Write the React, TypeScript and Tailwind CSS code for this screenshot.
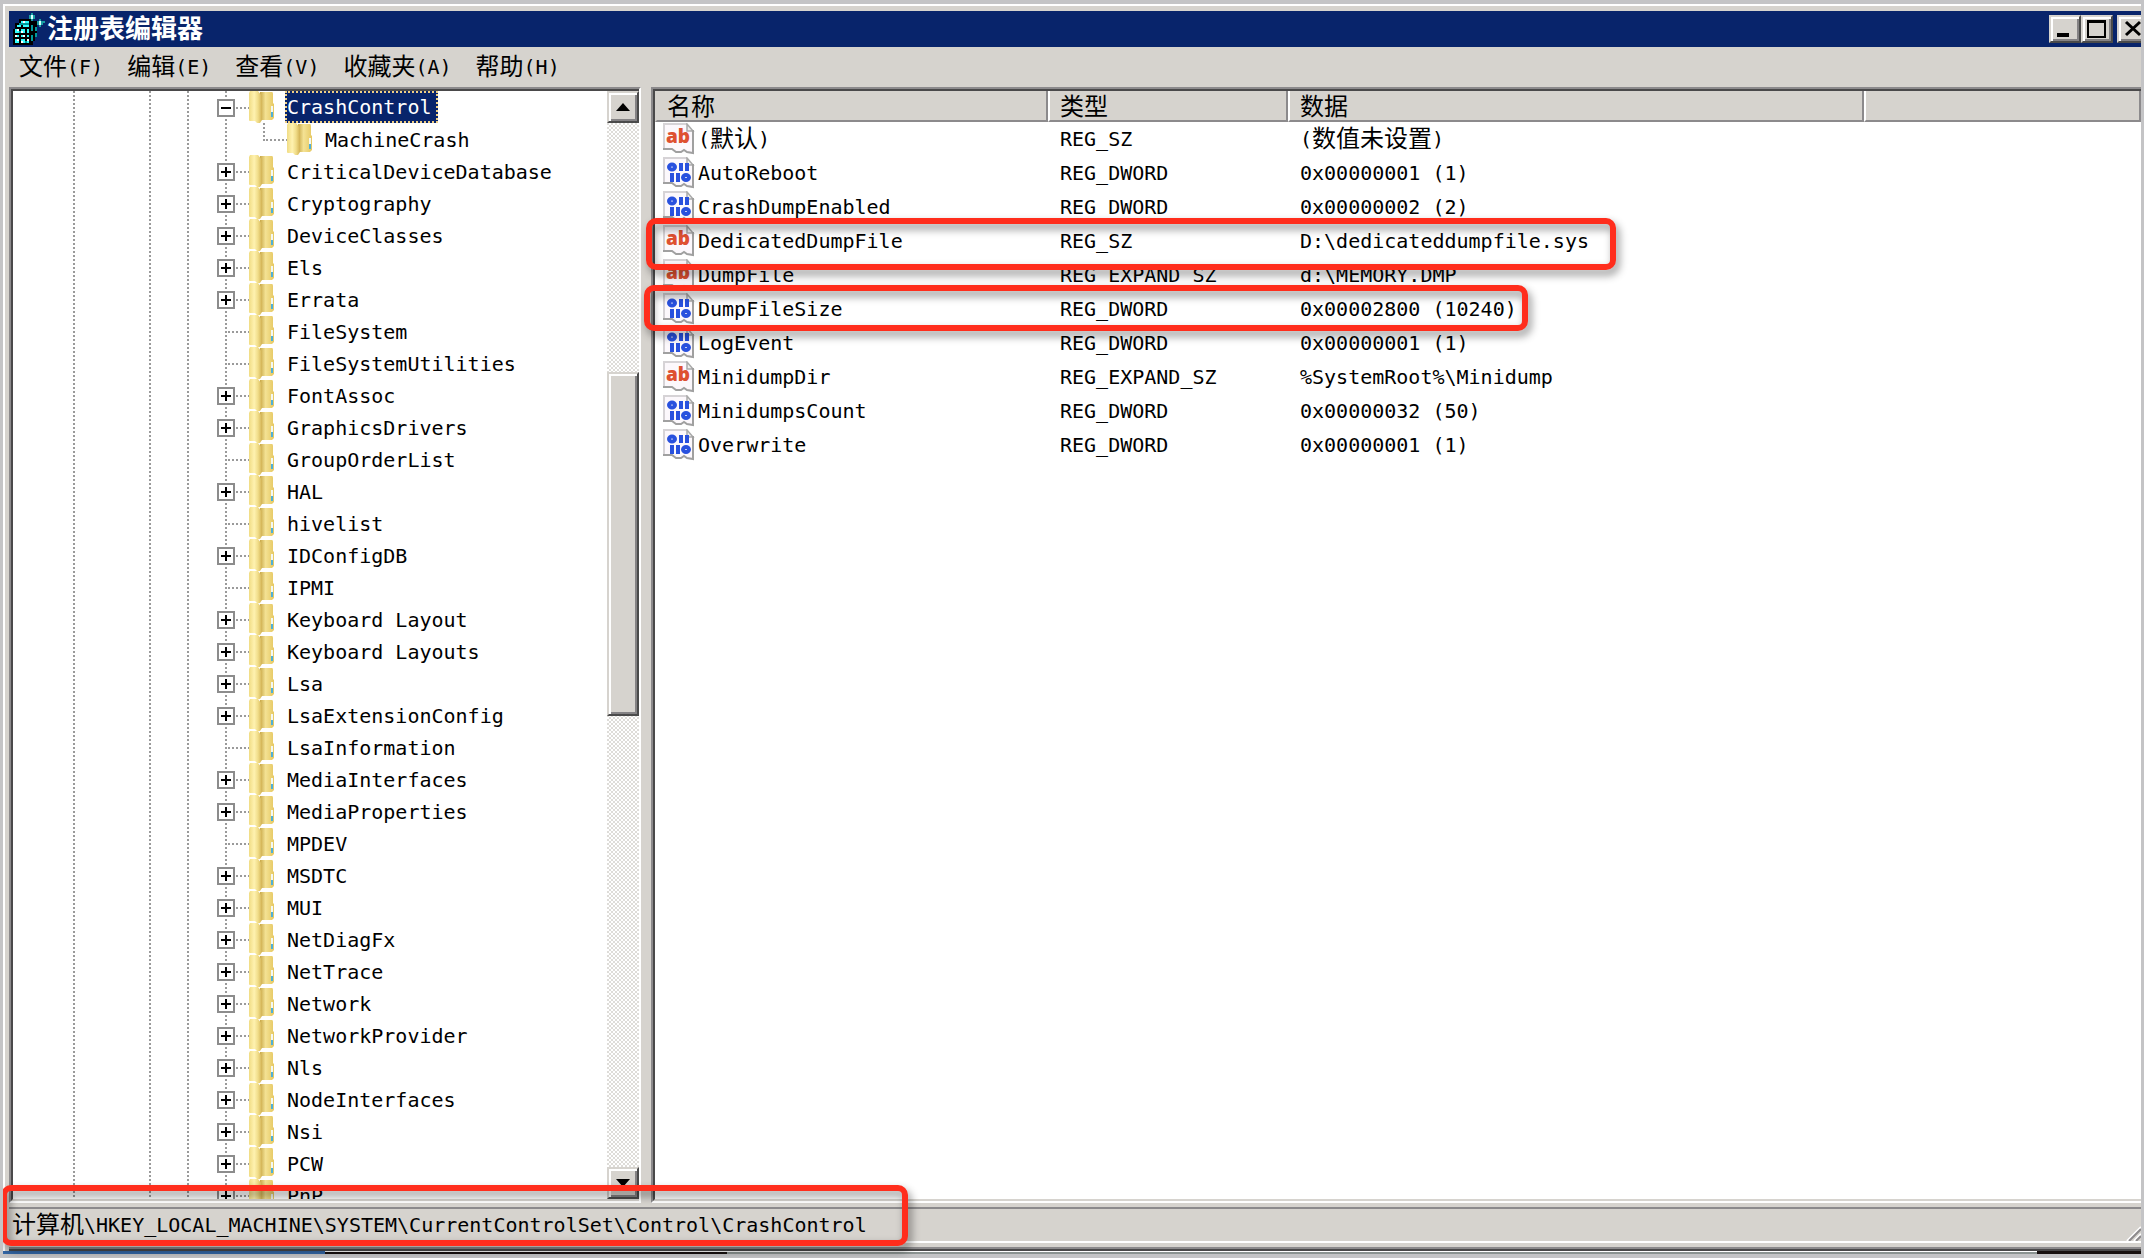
import type { ReactNode } from 'react';

type NodeState = 'open' | 'closed' | 'leaf';

interface TreeNode {
  name: string;
  state: NodeState;
  depth?: number;
}

interface RegistryValue {
  id: string;
  label?: ReactNode;
  kind: 'text' | 'binary';
  type: string;
  data: ReactNode;
}

const MENUS = [
  { label: '文件', key: 'F' },
  { label: '编辑', key: 'E' },
  { label: '查看', key: 'V' },
  { label: '收藏夹', key: 'A' },
  { label: '帮助', key: 'H' },
];

const TREE: TreeNode[] = [
  { name: 'CrashControl', state: 'open' },
  { name: 'MachineCrash', state: 'leaf', depth: 1 },
  { name: 'CriticalDeviceDatabase', state: 'closed' },
  { name: 'Cryptography', state: 'closed' },
  { name: 'DeviceClasses', state: 'closed' },
  { name: 'Els', state: 'closed' },
  { name: 'Errata', state: 'closed' },
  { name: 'FileSystem', state: 'leaf' },
  { name: 'FileSystemUtilities', state: 'leaf' },
  { name: 'FontAssoc', state: 'closed' },
  { name: 'GraphicsDrivers', state: 'closed' },
  { name: 'GroupOrderList', state: 'leaf' },
  { name: 'HAL', state: 'closed' },
  { name: 'hivelist', state: 'leaf' },
  { name: 'IDConfigDB', state: 'closed' },
  { name: 'IPMI', state: 'leaf' },
  { name: 'Keyboard Layout', state: 'closed' },
  { name: 'Keyboard Layouts', state: 'closed' },
  { name: 'Lsa', state: 'closed' },
  { name: 'LsaExtensionConfig', state: 'closed' },
  { name: 'LsaInformation', state: 'leaf' },
  { name: 'MediaInterfaces', state: 'closed' },
  { name: 'MediaProperties', state: 'closed' },
  { name: 'MPDEV', state: 'leaf' },
  { name: 'MSDTC', state: 'closed' },
  { name: 'MUI', state: 'closed' },
  { name: 'NetDiagFx', state: 'closed' },
  { name: 'NetTrace', state: 'closed' },
  { name: 'Network', state: 'closed' },
  { name: 'NetworkProvider', state: 'closed' },
  { name: 'Nls', state: 'closed' },
  { name: 'NodeInterfaces', state: 'closed' },
  { name: 'Nsi', state: 'closed' },
  { name: 'PCW', state: 'closed' },
  { name: 'PnP', state: 'closed' },
];

const VALUES: RegistryValue[] = [
  { id: 'default', label: <Parens>默认</Parens>, kind: 'text', type: 'REG_SZ', data: <Parens>数值未设置</Parens> },
  { id: 'AutoReboot', kind: 'binary', type: 'REG_DWORD', data: '0x00000001 (1)' },
  { id: 'CrashDumpEnabled', kind: 'binary', type: 'REG_DWORD', data: '0x00000002 (2)' },
  { id: 'DedicatedDumpFile', kind: 'text', type: 'REG_SZ', data: 'D:\\dedicateddumpfile.sys' },
  { id: 'DumpFile', kind: 'text', type: 'REG_EXPAND_SZ', data: 'd:\\MEMORY.DMP' },
  { id: 'DumpFileSize', kind: 'binary', type: 'REG_DWORD', data: '0x00002800 (10240)' },
  { id: 'LogEvent', kind: 'binary', type: 'REG_DWORD', data: '0x00000001 (1)' },
  { id: 'MinidumpDir', kind: 'text', type: 'REG_EXPAND_SZ', data: '%SystemRoot%\\Minidump' },
  { id: 'MinidumpsCount', kind: 'binary', type: 'REG_DWORD', data: '0x00000032 (50)' },
  { id: 'Overwrite', kind: 'binary', type: 'REG_DWORD', data: '0x00000001 (1)' },
];

const BEVEL =
  'border-2 border-t-[#d6d3ce] border-l-[#d6d3ce] border-r-[#4a4a4a] border-b-[#4a4a4a] bg-[#d6d3ce] shadow-[inset_2px_2px_#fff,inset_-2px_-2px_#848284]';

function Hans({ children }: { children: ReactNode }) {
  return <span className="text-[24px] leading-none">{children}</span>;
}

function Parens({ children }: { children: ReactNode }) {
  return (
    <span className="flex items-center">
      (<Hans>{children}</Hans>)
    </span>
  );
}

function RegeditIcon() {
  return (
    <svg className="size-8 shrink-0" viewBox="0 0 16 16" shapeRendering="crispEdges" aria-hidden="true">
      <path d="M3 3h6v1h3v7h-1v3h-1v2H0V8h1V5h2z" fill="#000" />
      <path d="M4 4h4v1H4zM2 6h2v1H2zM5 6h3v1H5zM1 8h2v2H1zM4 8h2v2H4zM7 8h1v2H7zM1 11h2v1H1zM4 11h2v1H4zM7 11h1v1H7zM1 13h2v2H1zM4 13h2v2H4zM7 13h1v2H7z" fill="#3ff" />
      <path d="M3 5h5v1H3zM9 6h1v3H9zM11 7h1v2h-1zM9 11h1v3H9zM11 10h1v2h-1zM3 9h1v1H3zM6 14h1v1H6z" fill="#009a9c" />
      <path d="M5 4h1v1H5zM2 8h1v1H2zM4 9h1v1H4zM1 11h1v1H1zM5 11h1v1H5zM2 13h1v1H2zM4 14h1v1H4zM7 13h1v1H7z" fill="#fff" />
      <path d="M9 0h1v1h1v2h-1v1H9V3H8V1h1zM13 3h1v1h2v1h-1v1h-1v1h-1V6h-1V4h1z" fill="#19a0a4" />
      <path d="M9 1h1v2H9zM13 4h1v2h-1z" fill="#dff" />
    </svg>
  );
}

function FolderIcon() {
  return (
    <svg className="h-8 w-[26px] shrink-0" viewBox="0 0 26 32" aria-hidden="true">
      <defs>
        <linearGradient id="cover" x1="0" x2="1">
          <stop offset="0" stopColor="#f0dc84" />
          <stop offset="0.4" stopColor="#fff2b0" />
          <stop offset="0.7" stopColor="#f0dc88" />
          <stop offset="1" stopColor="#d2b254" />
        </linearGradient>
        <linearGradient id="back" x1="0" x2="1">
          <stop offset="0" stopColor="#c8a848" />
          <stop offset="0.4" stopColor="#f4e294" />
          <stop offset="1" stopColor="#e6c862" />
        </linearGradient>
      </defs>
      <path d="M11 1h12q1 0 1 2v9l1 1v14l-2 2H11z" fill="url(#back)" />
      <path d="M1 0h8l4 5v24l-2 3H8l-2-2H1q-1 0-1-1V2z" fill="url(#cover)" />
      <rect x="22" y="15" width="2" height="6" fill="#f3f8f4" />
      <rect x="22" y="21" width="2" height="5" fill="#4fb0d8" />
    </svg>
  );
}

function ValueIcon({ kind }: { kind: RegistryValue['kind'] }) {
  return (
    <svg className="size-8 shrink-0" viewBox="0 0 32 32" aria-hidden="true">
      <path d="M1 1h23l6 7v22l-6-1-4-3-3 3h-5l-4-4H1z" fill="#fcf8fc" />
      <path d="M1 25V1h23" fill="none" stroke="#d6d3d6" strokeWidth="2" />
      <path d="M24 1v7h6z" fill="#eee" stroke="#aaa" strokeWidth="1.5" />
      <path d="M30 7v23l-6-1-3-2-3 2h-5l-4-3H0" fill="none" stroke="#a0a0a0" strokeWidth="2" />
      {kind === 'text' ? (
        <text x="15" y="20" textAnchor="middle" fontFamily="Open Sans, sans-serif" fontWeight="800" fontSize="19" fill="#de5131">
          ab
        </text>
      ) : (
        <g fill="none" stroke="#2951de" strokeWidth="4">
          <ellipse cx="9" cy="10" rx="3" ry="2.5" />
          <path d="M18 6v8M24 6v8M9 16v9M15 16v9" />
          <ellipse cx="23" cy="20.5" rx="3" ry="2.5" />
        </g>
      )}
    </svg>
  );
}

function Guides() {
  return (
    <svg className="h-8 w-[204px] shrink-0" viewBox="0 0 204 32" shapeRendering="crispEdges" aria-hidden="true">
      <path d="M61 0v32M137 0v32M175 0v32" fill="none" stroke="#9a9a9a" strokeWidth="2" strokeDasharray="2 2" />
    </svg>
  );
}

function Branch({ state, nested }: { state: NodeState; nested: boolean }) {
  const branch = (
    <svg
      className={nested ? 'h-8 w-[70px] shrink-0' : 'h-8 w-8 shrink-0'}
      viewBox={nested ? '0 0 70 32' : '0 0 32 32'}
      shapeRendering="crispEdges"
      aria-hidden="true"
    >
      <path
        d={nested ? 'M9 0v32M47 0v18M49 17h21' : 'M9 0v32M11 17h21'}
        fill="none"
        stroke="#9a9a9a"
        strokeWidth="2"
        strokeDasharray="2 2"
      />
      {state !== 'leaf' && (
        <>
          <rect x="1" y="9" width="16" height="16" fill="#fff" stroke="#8c8c8c" strokeWidth="2" />
          <path d={state === 'open' ? 'M4 17h10' : 'M4 17h10M9 12v10'} stroke="#000" strokeWidth="2" />
        </>
      )}
    </svg>
  );

  if (state === 'leaf') return branch;
  return (
    <button type="button" aria-label={state === 'open' ? 'Collapse' : 'Expand'} className="shrink-0">
      {branch}
    </button>
  );
}

function TreeRow({ node }: { node: TreeNode }) {
  const selected = node.state === 'open';
  return (
    <li className="flex h-8 items-center">
      <Guides />
      <Branch state={node.state} nested={node.depth === 1} />
      <FolderIcon />
      <span
        className={
          selected
            ? 'ml-[10px] flex h-8 items-center border-2 border-dotted border-[#f0cf85] bg-[#08246b] pr-1 text-white'
            : 'ml-3 pt-px'
        }
      >
        {node.name}
      </span>
    </li>
  );
}

function ScrollBar() {
  return (
    <div className="flex w-8 shrink-0 flex-col bg-[repeating-conic-gradient(#fff_0_25%,#dedcd8_0_50%)] bg-size-[4px_4px]">
      <button type="button" aria-label="Scroll up" className={`flex h-8 shrink-0 items-center justify-center ${BEVEL}`}>
        <svg className="h-2 w-[14px]" viewBox="0 0 14 8" aria-hidden="true">
          <path d="M7 0l7 8H0z" />
        </svg>
      </button>
      <div className="min-h-0 flex-[250]" />
      <div className={`min-h-0 flex-[341] ${BEVEL}`} />
      <div className="min-h-0 flex-[453]" />
      <button type="button" aria-label="Scroll down" className={`flex h-8 shrink-0 items-center justify-center ${BEVEL}`}>
        <svg className="h-2 w-[14px]" viewBox="0 0 14 8" aria-hidden="true">
          <path d="M7 8L0 0h14z" />
        </svg>
      </button>
    </div>
  );
}

function ValueTable() {
  const head =
    'h-[31px] border-r-2 border-b-2 border-l-2 border-r-[#8c8a8c] border-b-[#8c8a8c] bg-[#d6d3ce] p-0 pt-[3px] pl-[10px] text-left text-[24px] leading-none font-normal';
  return (
    <table className="w-full table-fixed border-separate border-spacing-0">
      <colgroup>
        <col className="w-[393px]" />
        <col className="w-[240px]" />
        <col className="w-[576px]" />
        <col />
      </colgroup>
      <thead>
        <tr>
          <th className={`${head} border-l-[#d6d3ce]`}>名称</th>
          <th className={`${head} border-l-white`}>类型</th>
          <th className={`${head} border-l-white`}>数据</th>
          <td className={`${head} border-l-white`} />
        </tr>
      </thead>
      <tbody>
        {VALUES.map((value) => (
          <tr key={value.id} className="h-[34px]">
            <td className="p-0 pl-2">
              <div className="flex h-[34px] items-center gap-[3px]">
                <ValueIcon kind={value.kind} />
                <span>{value.label ?? value.id}</span>
              </div>
            </td>
            <td className="p-0 pl-3 leading-none">{value.type}</td>
            <td className="p-0 pl-3 leading-none whitespace-nowrap">{value.data}</td>
            <td className="p-0" />
          </tr>
        ))}
      </tbody>
    </table>
  );
}

function CaptionButtons() {
  return (
    <div className="-mr-2 flex h-7 shrink-0">
      <button type="button" aria-label="Minimize" className={`w-8 ${BEVEL}`}>
        <svg className="size-full" viewBox="0 0 28 24" aria-hidden="true">
          <path d="M6 16h12v4H6z" />
        </svg>
      </button>
      <button type="button" aria-label="Maximize" className={`w-8 ${BEVEL}`}>
        <svg className="size-full" viewBox="0 0 28 24" aria-hidden="true">
          <path d="M5 4h17v16H5z" fill="none" stroke="#000" strokeWidth="2" />
          <path d="M4 3h19v3H4z" />
        </svg>
      </button>
      <button type="button" aria-label="Close" className={`ml-1 w-8 ${BEVEL}`}>
        <svg className="size-full" viewBox="0 0 28 24" aria-hidden="true">
          <path d="M7 5l14 13M21 5L7 18" stroke="#000" strokeWidth="3" />
        </svg>
      </button>
    </div>
  );
}

function Highlight({ className }: { className: string }) {
  return (
    <div
      aria-hidden="true"
      className={`pointer-events-none absolute rounded-[10px] border-6 border-[#ff2d1c] drop-shadow-[3px_5px_4px_rgba(0,0,0,0.45)] ${className}`}
    />
  );
}

export default function App() {
  return (
    <div className="h-screen overflow-hidden bg-[#c4c4c6] pt-1 pr-[3px] pl-[3px] font-['DejaVu_Sans_Mono','Noto_Sans_CJK_SC',monospace] text-[20px] leading-none text-black">
      <div className="relative flex h-full flex-col overflow-hidden">
        <div className="flex min-h-0 flex-1 flex-col border-t-2 border-l-2 border-white bg-[#d6d3ce] pt-[5px] pl-1">
          <header className="flex h-9 shrink-0 items-center bg-[#08246b] pl-1">
            <RegeditIcon />
            <h1 className="flex-1 pl-[2px] text-[26px] leading-none font-bold text-white">注册表编辑器</h1>
            <CaptionButtons />
          </header>

          <nav className="flex h-10 shrink-0 items-center gap-6 pl-[10px]">
            {MENUS.map((menu) => (
              <button type="button" key={menu.key} className="flex items-center">
                <Hans>{menu.label}</Hans>({menu.key})
              </button>
            ))}
          </nav>

          <main className="flex min-h-0 flex-1">
            <section className="flex w-[632px] shrink-0 overflow-hidden border-t-2 border-r-2 border-b-2 border-l-2 border-t-[#8c8a8c] border-r-white border-b-white border-l-[#8c8a8c]">
              <div className="flex min-w-0 flex-1 border-t-2 border-b-2 border-l-2 border-t-[#4a494a] border-b-[#d6d3ce] border-l-[#4a494a] bg-white">
                <ul className="min-w-0 flex-1 overflow-hidden">
                  {TREE.map((node) => (
                    <TreeRow key={node.name} node={node} />
                  ))}
                </ul>
                <ScrollBar />
              </div>
            </section>
            <section className="ml-[10px] min-w-0 flex-1 border-t-2 border-b-2 border-l-2 border-t-[#8c8a8c] border-b-white border-l-[#8c8a8c]">
              <div className="h-full border-t-2 border-b-2 border-l-2 border-t-[#4a494a] border-b-[#d6d3ce] border-l-[#4a494a] bg-white">
                <ValueTable />
              </div>
            </section>
          </main>

          <footer className="mt-1 flex h-9 shrink-0 items-center border-t-2 border-b-2 border-t-[#8c8a8c] border-b-white pl-[3px]">
            <Hans>计算机</Hans>
            <span className="flex-1">\HKEY_LOCAL_MACHINE\SYSTEM\CurrentControlSet\Control\CrashControl</span>
            <svg className="size-4 shrink-0 self-end" viewBox="0 0 16 16" aria-hidden="true">
              <path d="M2 16L16 2M9 16l7-7" stroke="#fff" strokeWidth="2" />
              <path d="M4 16L16 4M11 16l5-5" stroke="#8c8a8c" strokeWidth="2" />
            </svg>
          </footer>
          <div className="mt-1 h-1 shrink-0 border-t-2 border-b-2 border-t-[#8c8a8c] border-b-[#4a494a]" />
        </div>

        {/* Strip of desktop that shows under the window */}
        <div className="flex h-[3px] shrink-0">
          <div className="w-[322px] bg-[#3468a8]" />
          <div className="w-[402px] border-t border-white bg-[#17100f]" />
          <div className="flex-1 border-t border-white bg-[#8b9391]" />
          <div className="w-[104px] bg-[#17100f]" />
        </div>
        <div className="h-1 shrink-0 bg-[#c4c4c6]" />

        <Highlight className="top-[214px] left-[643px] h-[52px] w-[970px]" />
        <Highlight className="top-[281px] left-[641px] h-[46px] w-[884px]" />
        <Highlight className="-left-[2px] top-[1181px] h-[61px] w-[907px]" />
      </div>
    </div>
  );
}
